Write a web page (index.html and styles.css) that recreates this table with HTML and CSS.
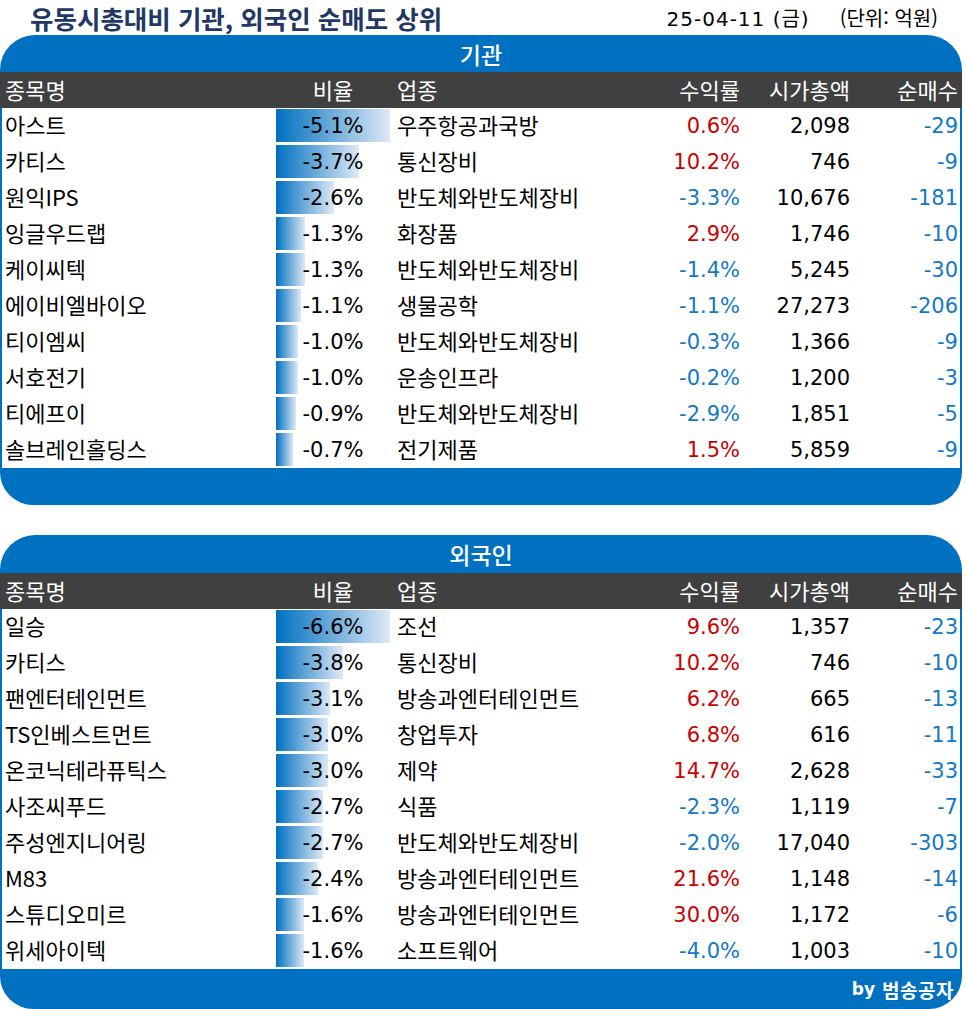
FILE: index.html
```html
<!DOCTYPE html>
<html lang="ko">
<head>
<meta charset="utf-8">
<title>유동시총대비 기관, 외국인 순매도 상위</title>
<link rel="stylesheet" href="styles.css">
</head>
<body>
<div class="page">
  <div class="top">
    <div class="title">유동시총대비 기관, 외국인 순매도 상위</div>
    <div class="date">25-04-11 (금)</div>
    <div class="unit">(단위: 억원)</div>
  </div>

  <section class="panel">
    <div class="band band-top">기관</div>
    <div class="grid head">
      <div class="c-name">종목명</div>
      <div class="c-ratio">비율</div>
      <div class="c-sector">업종</div>
      <div class="c-num">수익률</div>
      <div class="c-num">시가총액</div>
      <div class="c-num c-last">순매수</div>
    </div>
    <div class="rows">
      <div class="grid row"><div class="c-name">아스트</div><div class="c-ratio num" style="--w:114px">-5.1%</div><div class="c-sector">우주항공과국방</div><div class="c-num num up">0.6%</div><div class="c-num num">2,098</div><div class="c-num c-last num dn">-29</div></div>
      <div class="grid row"><div class="c-name">카티스</div><div class="c-ratio num" style="--w:83px">-3.7%</div><div class="c-sector">통신장비</div><div class="c-num num up">10.2%</div><div class="c-num num">746</div><div class="c-num c-last num dn">-9</div></div>
      <div class="grid row"><div class="c-name">원익IPS</div><div class="c-ratio num" style="--w:58px">-2.6%</div><div class="c-sector">반도체와반도체장비</div><div class="c-num num dn">-3.3%</div><div class="c-num num">10,676</div><div class="c-num c-last num dn">-181</div></div>
      <div class="grid row"><div class="c-name">잉글우드랩</div><div class="c-ratio num" style="--w:29px">-1.3%</div><div class="c-sector">화장품</div><div class="c-num num up">2.9%</div><div class="c-num num">1,746</div><div class="c-num c-last num dn">-10</div></div>
      <div class="grid row"><div class="c-name">케이씨텍</div><div class="c-ratio num" style="--w:29px">-1.3%</div><div class="c-sector">반도체와반도체장비</div><div class="c-num num dn">-1.4%</div><div class="c-num num">5,245</div><div class="c-num c-last num dn">-30</div></div>
      <div class="grid row"><div class="c-name">에이비엘바이오</div><div class="c-ratio num" style="--w:25px">-1.1%</div><div class="c-sector">생물공학</div><div class="c-num num dn">-1.1%</div><div class="c-num num">27,273</div><div class="c-num c-last num dn">-206</div></div>
      <div class="grid row"><div class="c-name">티이엠씨</div><div class="c-ratio num" style="--w:22px">-1.0%</div><div class="c-sector">반도체와반도체장비</div><div class="c-num num dn">-0.3%</div><div class="c-num num">1,366</div><div class="c-num c-last num dn">-9</div></div>
      <div class="grid row"><div class="c-name">서호전기</div><div class="c-ratio num" style="--w:22px">-1.0%</div><div class="c-sector">운송인프라</div><div class="c-num num dn">-0.2%</div><div class="c-num num">1,200</div><div class="c-num c-last num dn">-3</div></div>
      <div class="grid row"><div class="c-name">티에프이</div><div class="c-ratio num" style="--w:20px">-0.9%</div><div class="c-sector">반도체와반도체장비</div><div class="c-num num dn">-2.9%</div><div class="c-num num">1,851</div><div class="c-num c-last num dn">-5</div></div>
      <div class="grid row"><div class="c-name">솔브레인홀딩스</div><div class="c-ratio num" style="--w:17px">-0.7%</div><div class="c-sector">전기제품</div><div class="c-num num up">1.5%</div><div class="c-num num">5,859</div><div class="c-num c-last num dn">-9</div></div>
    </div>
    <div class="band band-bottom"></div>
  </section>

  <section class="panel panel-2">
    <div class="band band-top">외국인</div>
    <div class="grid head">
      <div class="c-name">종목명</div>
      <div class="c-ratio">비율</div>
      <div class="c-sector">업종</div>
      <div class="c-num">수익률</div>
      <div class="c-num">시가총액</div>
      <div class="c-num c-last">순매수</div>
    </div>
    <div class="rows">
      <div class="grid row"><div class="c-name">일승</div><div class="c-ratio num" style="--w:114px">-6.6%</div><div class="c-sector">조선</div><div class="c-num num up">9.6%</div><div class="c-num num">1,357</div><div class="c-num c-last num dn">-23</div></div>
      <div class="grid row"><div class="c-name">카티스</div><div class="c-ratio num" style="--w:67px">-3.8%</div><div class="c-sector">통신장비</div><div class="c-num num up">10.2%</div><div class="c-num num">746</div><div class="c-num c-last num dn">-10</div></div>
      <div class="grid row"><div class="c-name">팬엔터테인먼트</div><div class="c-ratio num" style="--w:54px">-3.1%</div><div class="c-sector">방송과엔터테인먼트</div><div class="c-num num up">6.2%</div><div class="c-num num">665</div><div class="c-num c-last num dn">-13</div></div>
      <div class="grid row"><div class="c-name">TS인베스트먼트</div><div class="c-ratio num" style="--w:52px">-3.0%</div><div class="c-sector">창업투자</div><div class="c-num num up">6.8%</div><div class="c-num num">616</div><div class="c-num c-last num dn">-11</div></div>
      <div class="grid row"><div class="c-name">온코닉테라퓨틱스</div><div class="c-ratio num" style="--w:52px">-3.0%</div><div class="c-sector">제약</div><div class="c-num num up">14.7%</div><div class="c-num num">2,628</div><div class="c-num c-last num dn">-33</div></div>
      <div class="grid row"><div class="c-name">사조씨푸드</div><div class="c-ratio num" style="--w:47px">-2.7%</div><div class="c-sector">식품</div><div class="c-num num dn">-2.3%</div><div class="c-num num">1,119</div><div class="c-num c-last num dn">-7</div></div>
      <div class="grid row"><div class="c-name">주성엔지니어링</div><div class="c-ratio num" style="--w:47px">-2.7%</div><div class="c-sector">반도체와반도체장비</div><div class="c-num num dn">-2.0%</div><div class="c-num num">17,040</div><div class="c-num c-last num dn">-303</div></div>
      <div class="grid row"><div class="c-name">M83</div><div class="c-ratio num" style="--w:42px">-2.4%</div><div class="c-sector">방송과엔터테인먼트</div><div class="c-num num up">21.6%</div><div class="c-num num">1,148</div><div class="c-num c-last num dn">-14</div></div>
      <div class="grid row"><div class="c-name">스튜디오미르</div><div class="c-ratio num" style="--w:28px">-1.6%</div><div class="c-sector">방송과엔터테인먼트</div><div class="c-num num up">30.0%</div><div class="c-num num">1,172</div><div class="c-num c-last num dn">-6</div></div>
      <div class="grid row"><div class="c-name">위세아이텍</div><div class="c-ratio num" style="--w:28px">-1.6%</div><div class="c-sector">소프트웨어</div><div class="c-num num dn">-4.0%</div><div class="c-num num">1,003</div><div class="c-num c-last num dn">-10</div></div>
    </div>
    <div class="band band-bottom band-sign"><span class="by">by</span><span class="sign">범송공자</span></div>
  </section>
</div>
</body>
</html>
```

FILE: styles.css
```css
* { box-sizing: border-box; }
html, body { margin: 0; padding: 0; background: #ffffff; }
body {
  font-family: "Noto Sans CJK KR", "Noto Sans", sans-serif;
  color: #000;
}
.page { width: 966px; }

.top {
  height: 35px;
  display: flex;
  align-items: center;
  padding: 0 28px 0 30px;
}
.title {
  font-size: 25.5px;
  font-weight: 700;
  color: #1f3864;
}
.date {
  margin-left: auto;
  font-family: "DejaVu Sans", "Noto Sans CJK KR", sans-serif;
  font-size: 20px;
  letter-spacing: 1px;
}
.unit {
  margin-left: 30px;
  font-size: 20px;
}

.panel {
  width: 962px;
  background: #0070c0;
  border-radius: 35px 35px 33px 33px;
  overflow: hidden;
}
.panel-2 { margin-top: 30px; }

.band {
  height: 37px;
  color: #ffffff;
  display: flex;
  align-items: center;
  justify-content: center;
  font-size: 23px;
  font-weight: 500;
}
.panel-2 .band-top { height: 38px; }
.band-bottom { height: 37px; }
.band-sign {
  height: 40px;
  justify-content: flex-end;
  padding-right: 8px;
  gap: 7px;
  font-weight: 700;
}
.by {
  font-family: "DejaVu Sans", sans-serif;
  font-size: 17px;
  font-weight: 700;
}
.sign {
  font-size: 19px;
  font-weight: 700;
  letter-spacing: 0.5px;
}

.grid {
  display: grid;
  grid-template-columns: 274px 114px 260px 94px 110px 106px;
  align-items: stretch;
}
.head {
  height: 36px;
  background: #404040;
  color: #ffffff;
  padding: 0 6px 0 2px;
  width: 966px;
  font-size: 22px;
}
.head > div { line-height: 34px; }
.rows {
  background: #ffffff;
  margin: 0 2px;
}
.row { height: 36px; font-size: 22px; }
.row > div { line-height: 33px; white-space: nowrap; }
.row > .num { line-height: 36px; }

.c-name { padding-left: 3px; }
.c-sector { padding-left: 7px; }
.c-ratio { text-align: center; }
.c-num { text-align: right; padding-right: 4px; }
.c-last { padding-right: 2px; }

.num {
  font-family: "DejaVu Sans", "Noto Sans CJK KR", sans-serif;
  font-size: 21px;
}
.row .c-ratio {
  background-image: linear-gradient(to right, #0070c0, #dde9f6);
  background-repeat: no-repeat;
  background-position: left 1px;
  background-size: var(--w) 33px;
}
.up { color: #cc0000; }
.dn { color: #1478c8; }
```
